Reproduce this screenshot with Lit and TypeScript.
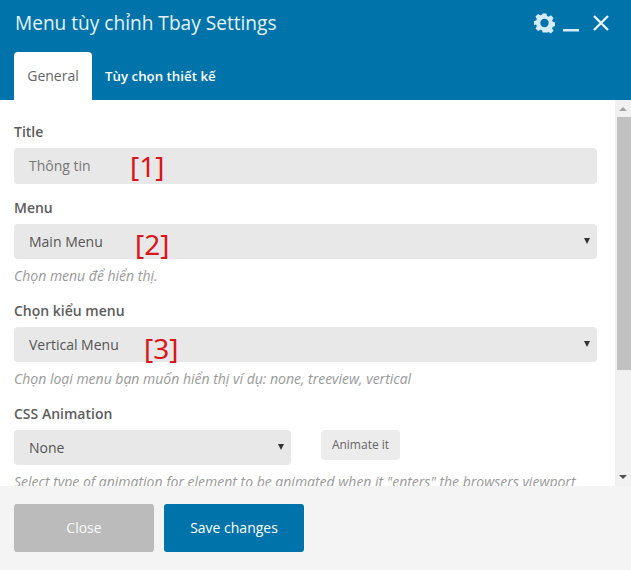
import { LitElement, html, css } from "lit";
import { customElement } from "lit/decorators.js";

@customElement("app-root")
export class AppRoot extends LitElement {
  static styles = css`
    :host { display: block; width: 631px; height: 570px; font-family: "Open Sans", sans-serif; color: #555; background: #fff; overflow: hidden; }
    .modal { display: flex; flex-direction: column; height: 570px; }
    .header { background: #0073aa; height: 100px; box-sizing: border-box; flex: none; display: flex; flex-direction: column; }
    .top { display: flex; align-items: center; height: 52px; padding: 0 21px 6px 15px; box-sizing: border-box; }
    .title { font-size: 19.1px; line-height: 46px; color: #e5f3fa; flex: 1; }
    .icons { display: flex; align-items: center; }
    .icons svg { display: block; }
    .gear { margin-right: 8px; }
    .min { margin-right: 13px; }
    .tabs { display: flex; height: 48px; padding-left: 14px; }
    .tab { font-size: 14px; line-height: 48px; padding: 0 13px; }
    .tab.on { background: #fff; color: #666; border-radius: 4px 4px 0 0; width: 78px; box-sizing: border-box; text-align: center; padding: 0; }
    .tab.off { color: #fff; font-weight: 600; font-size: 13.3px; }
    .main { flex: 1; display: flex; min-height: 0; }
    .content { flex: 1; overflow: hidden; padding: 22px 18px 0 14px; }
    .label { font-size: 14px; font-weight: 600; line-height: 20px; color: #5c5c5c; margin-bottom: 6px; }
    .field { position: relative; background: #e8e8e8; border-radius: 4px; height: 35px; line-height: 35px; padding-left: 15px; font-size: 14px; color: #555; }
    .field.input { height: 36px; line-height: 36px; color: #777; }
    .caret { position: absolute; right: 7px; top: 14px; width: 0; height: 0; border-left: 3.5px solid transparent; border-right: 3.5px solid transparent; border-top: 6px solid #333; }
    .note { position: absolute; font-family: "Noto Sans", "Open Sans", sans-serif; font-size: 28px; line-height: 36px; color: #d9161c; }
    .n1 { left: 116px; top: 0; }
    .n2 { left: 121px; top: 2px; }
    .n3 { left: 130px; top: 3px; }
    .help { font-size: 14px; font-style: italic; color: #999; line-height: 20px; margin-top: 7px; white-space: nowrap; }
    .group { margin-bottom: 15px; }
    .group.first { margin-bottom: 14px; }
    .row { display: flex; align-items: flex-start; gap: 30px; }
    .row .field { width: 262px; flex: none; }
    .anim { background: #ececec; border-radius: 4px; font-size: 12px; line-height: 30px; height: 30px; width: 79px; text-align: center; color: #666; }
    .scrollbar { flex: none; width: 16px; background: #f1f1f1; display: flex; flex-direction: column; align-items: center; }
    .up { margin-top: 7px; width: 0; height: 0; border-left: 4px solid transparent; border-right: 4px solid transparent; border-bottom: 4px solid #a3a3a3; }
    .thumb { margin-top: 6px; width: 14px; margin-left: 2px; height: 253px; background: #c1c1c1; }
    .down { margin-top: auto; margin-bottom: 7px; width: 0; height: 0; border-left: 4px solid transparent; border-right: 4px solid transparent; border-top: 4px solid #505050; }
    .footer { flex: none; height: 84px; background: #f4f4f4; padding: 18px 14px; box-sizing: border-box; display: flex; gap: 10px; }
    .btn { width: 140px; height: 48px; border-radius: 3px; font-size: 14px; line-height: 48px; text-align: center; }
    .close { background: #bbb; color: #fafafa; }
    .save { background: #0073aa; color: #fff; }
  `;

  render() {
    return html`<div class="modal">
      <div class="header">
        <div class="top">
          <div class="title">Menu tùy chỉnh Tbay Settings</div>
          <div class="icons">
            <svg class="gear" width="21" height="22" viewBox="0 0 22 22"><path fill="#d5ecf8" fill-rule="evenodd" d="M9 1h4l.6 2.7 1.7.7 2.4-1.5 2.8 2.8-1.5 2.4.7 1.7 2.3.6v4l-2.3.6-.7 1.7 1.5 2.4-2.8 2.8-2.4-1.5-1.7.7L13 21H9l-.6-2.3-1.7-.7-2.4 1.5-2.8-2.8 1.5-2.4-.7-1.7L0 13V9l2.3-.6.7-1.7-1.5-2.4 2.8-2.8 2.4 1.5 1.7-.7zM11 6.6a4.4 4.4 0 1 0 0 8.8 4.4 4.4 0 0 0 0-8.8z"/></svg>
            <svg class="min" width="16" height="22" viewBox="0 0 16 22"><rect x="0" y="17" width="16" height="2.5" fill="#d5ecf8"/></svg>
            <svg width="18" height="22" viewBox="0 0 18 22"><path d="M2 4l14 14M16 4L2 18" stroke="#e5f3fa" stroke-width="2.4" fill="none"/></svg>
          </div>
        </div>
        <div class="tabs">
          <div class="tab on">General</div>
          <div class="tab off">Tùy chọn thiết kế</div>
        </div>
      </div>
      <div class="main">
        <div class="content">
          <div class="group first">
            <div class="label">Title</div>
            <div class="field input">Thông tin<span class="note n1">[1]</span></div>
          </div>
          <div class="group">
            <div class="label">Menu</div>
            <div class="field">Main Menu<span class="note n2">[2]</span><span class="caret"></span></div>
            <div class="help">Chọn menu để hiển thị.</div>
          </div>
          <div class="group">
            <div class="label">Chọn kiểu menu</div>
            <div class="field">Vertical Menu<span class="note n3">[3]</span><span class="caret"></span></div>
            <div class="help">Chọn loại menu bạn muốn hiển thị ví dụ: none, treeview, vertical</div>
          </div>
          <div class="group">
            <div class="label">CSS Animation</div>
            <div class="row">
              <div class="field">None<span class="caret"></span></div>
              <div class="anim">Animate it</div>
            </div>
            <div class="help">Select type of animation for element to be animated when it "enters" the browsers viewport</div>
          </div>
        </div>
        <div class="scrollbar"><div class="up"></div><div class="thumb"></div><div class="down"></div></div>
      </div>
      <div class="footer">
        <div class="btn close">Close</div>
        <div class="btn save">Save changes</div>
      </div>
    </div>`;
  }
}
